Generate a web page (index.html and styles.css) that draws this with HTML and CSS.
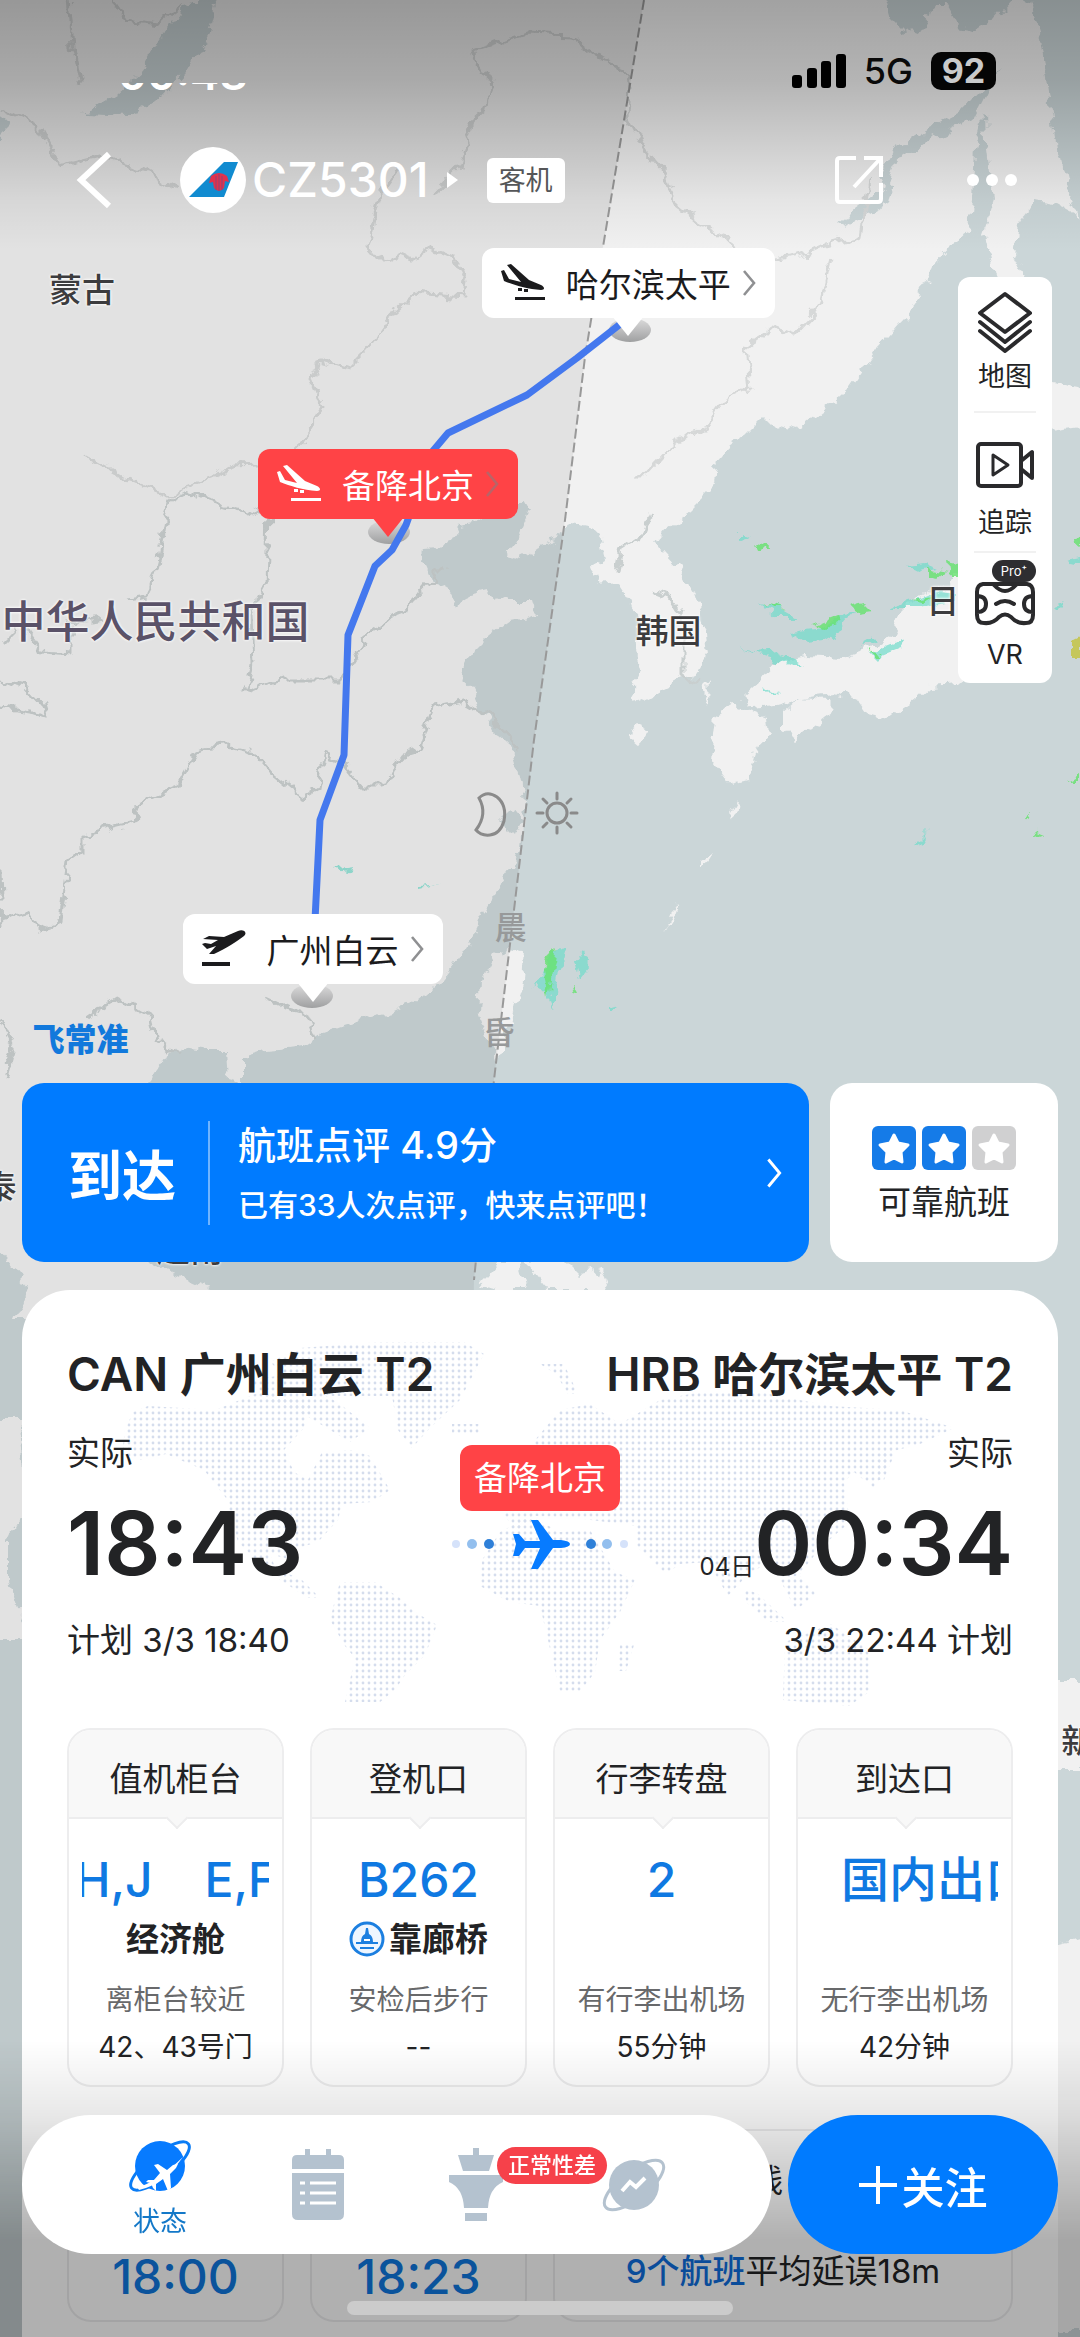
FILE: index.html
```html
<!DOCTYPE html>
<html lang="zh-CN">
<head>
<meta charset="utf-8">
<meta name="viewport" content="width=device-width, initial-scale=1">
<title>CZ5301 航班状态</title>
<link rel="stylesheet" href="styles.css">
</head>
<body>
<svg class="defs" width="0" height="0" aria-hidden="true">
  <defs>
    <symbol id="landing" viewBox="0 0 46 38">
      <path d="M1 7l3-1 5 9 12 3L7 1l4-1 18 16 12 5c4 2 4 5 0 5-14-1-27-5-37-9z"/>
      <path d="M18 24h4v3h-4zM24 25h4v3h-4zM15 33h30v3H15z"/>
    </symbol>
    <symbol id="takeoff" viewBox="0 0 46 38">
      <path d="M2 9l6-3 15 1 14-6c5-2 10 1 6 5-8 6-17 12-30 18h-5l7-8-9 3-5-5 3-1 6 1 7-4z"/>
      <path d="M1 32h28v4H1z"/>
    </symbol>
    <symbol id="chevron" viewBox="0 0 16 32"><path d="M3 4l10 12L3 28" fill="none" stroke="currentColor" stroke-width="2.6"/></symbol>
    <symbol id="star" viewBox="0 0 44 44"><rect width="44" height="44" rx="6"/><path d="M22 9l4 8 10 2-7 7 1 10-8-4-8 4 1-10-7-7 10-2z" fill="#fff" stroke="#fff" stroke-width="3" stroke-linejoin="round"/></symbol>
  </defs>
</svg>

<main class="app">
  <div class="map">
    <svg class="map-art" viewBox="0 0 1080 2337" preserveAspectRatio="none" aria-hidden="true">
      <defs>
        <filter id="rough" x="-5%" y="-5%" width="110%" height="110%">
          <feTurbulence type="fractalNoise" baseFrequency=".07" numOctaves="3" seed="4" result="n"/>
          <feDisplacementMap in="SourceGraphic" in2="n" scale="16" xChannelSelector="R" yChannelSelector="G"/>
        </filter>
        <linearGradient id="ball" x1="0" y1="0" x2="0" y2="1"><stop offset="0" stop-color="#dcdcdc"/><stop offset="1" stop-color="#9fa0a1"/></linearGradient>
      </defs>
      <rect width="1080" height="2337" fill="#cbd6d8"/>
      <g fill="#f1f1f1" filter="url(#rough)">
        <path d="M-20 -20H885V0L890 18 905 33 925 27 932 4H945L958 28 985 33 996 46 1000 60 1003 100 985 112 975 150 972 200 969 232 950 245 935 265 915 305 880 345 850 388 825 410 797 431 775 425 765 415 745 435 728 448 718 460 712 490 690 512 665 530 655 543 663 552 680 570 696 596 706 630 708 655 698 672 680 680 660 690 638 702 628 694 640 672 634 650 642 632 630 600 618 582 598 584 592 568 606 560 602 540 588 524 568 520 562 538 540 545 520 560 504 556 514 545 530 510 524 500 495 508 474 524 460 526 448 546 424 548 422 560 430 578 446 588 455 608 470 596 486 592 504 600 534 600 538 614 510 620 490 634 472 652 460 676 475 690 484 712 495 735 512 750 520 775 524 800 519 845 513 868 498 890 486 910 474 935 462 955 448 972 438 985 420 1000 402 1008 390 1014 370 1019 345 1026 320 1035 302 1047 280 1050 258 1052 245 1056 245 1085 228 1080 226 1052 210 1052 180 1048 165 1056 150 1082 120 1110 90 1200 150 1262 215 1290 200 1320 15 1320 28 1285 0 1250H-20z"/>
        <path d="M1025 0l10 6 5 32 10 60 8 50 12 50 10 18-22-12-22-4-18 24-4 32 14 26 6 30h-30l-12-50-8-30 10-30-8-60-2-50-10-60 20-12 18-20-4-10z"/>
        <path d="M1048 382l52 10v32l-56 8z"/>
        <path d="M742 698l20-18 15-18 30-6 35 2 30-10 20-14 8-20 18-18 30-12 20-20 70-20v110l-30 10-20 12-12-8-18 16-30 2-22 20-18 14-20-6-10-14-24-6-30 4-28 8-22 2z"/>
        <path d="M782 714l18-16 30 2 8 8-20 16-24 16-12-10z"/>
        <path d="M715 718l20-14 30 12 2 16-10 20-10 28-16 4-20-26 2-22z"/>
        <path d="M627 733l12-8 8 4-8 14zM508 948l14 4-2 30-14 60-10 20-18-50 2-30 14-26zM702 689l6-8-1 22zM700 860l12-8-12 18zM672 912l6-8-8 20-6 10zM728 812l8-14-2 20z"/>
        <path d="M500 1262h20l8 28h-30l-18-4zM525 1262l40-2 14 14 20-4 8 20h-60l-16-20z"/>
        <path d="M-20 1420h40l8 80-20 40v40l20 60H-20zM1050 1680h50v90h-50zM1050 1945l50-14v400h-50z"/>
      </g>
      <g fill="#cbd6d8" filter="url(#rough)">
        <path d="M190 0h28l-8 30-24 42-22 24-34 20-46-2 34-20 26-24 16-30z"/>
        <path d="M1000 68L960 112 925 130 892 150 880 178 886 186 852 210 842 226 870 214 886 204 896 160 930 138 975 118zM-10 110l16 12-8 24zM500 820l12-12 8 10-6 16z"/>
      </g>
      <g class="border-lines" filter="url(#rough)">
        <path d="M112 0l14 20 34 4 22-18M68 0l4 45 8 40M0 108l40 20 20 38 40-10 46 14 32 20M480 70l-8-18 24-8 30-10 46 2 24 18 24 14 10 18-2 30 18 35 18 20 10 30 24 20 32 20 8 28M480 72l14 6-6 30-16 14-14 45-22 26M398 170l-20 28-10 50 12 14 20-8 14 6 16-12 24 10 14 20-2 20-50-4-22 20-14 20-18 20-14 14-26-8-12 20 12 28-16 24-8 20-14 12-50 2-14 8-34 14-16 8-40-16-20-12-26-14M870 180l-8 56-40 10-18 8-30 5M830 260l-12 50-24 26-22-8-26 20 4 40-28 14-22 30-24 10-38 40"/>
      </g>
      <g class="coast-lines" filter="url(#rough)">
        <path d="M268 514l-2 71-16 30 2 48-8 30 0 0 38-14 60 0 30-48 35-24 26-30 10-10M262 514l-38-10-36-12-20 10-10 55-10 40-20 3M0 645l22-22 20 28 28 2 0-30 36-5M0 680l26 6 18 20 4 12-18-6-30-4M0 920l30-8 6 18 24-8 8-60 14-10v-18l48-12 18-24 30-12 20-36 30-6 24 6 20 24 30 24 16-10 6-34 16 6 22 26 20 0 24-34 14-4 14-42 30-6 24 14 32 40M265 998l22 10 16 4 12 28M88 1018l30-20 32 18 6 24 22 14M0 870l2 60M0 1020l14 30-8 30M650 516l-8 20-22 14-4 20M650 590l20 8 12 20M684 640v36l14 6"/>
      </g>
      <g fill="#6fdccb" opacity=".7" filter="url(#rough)">
        <path d="M740 532l10 4-10 3zM760 606l22 3 14 8-20 0zM790 632l34-4 20-14 12-2-14 16-20 12-16 2zM888 608l26-8 24-10 16 2v10l-36 6zM870 652l24-10 14-4-8 10-24 10zM740 648l16 4 20-2 28 14-12 0-34-10zM905 565l24-2 10 4-20 4zM540 980l12-26 14-8-6 22-6 40-6-16-14-4zM576 960l8-10 6 16-10 12zM610 1002l8 6-8 2zM338 868l14-2-8 6zM764 688l14 6-12-2zM870 634l-6 14 10-8zM1066 560l20-4v8zM1052 606l12-4-8 8zM912 848l4-6 14-14-8 14zM420 886l20-2-20 4z"/>
      </g>
      <g fill="#66e36e" opacity=".8" filter="url(#rough)">
        <path d="M755 545l14 3-8 5zM766 606l20 4-16 0zM815 626l20-8 6 4-16 8zM846 604l16-4 10 10-14 2zM928 568l20 4-8 6-12-2zM950 560l10 2v18h-8zM912 600l20-3-10 6zM872 649l10 6-8 0zM546 958l10-10-4 26-4 24-4-26zM570 992l6-8-2 10zM1034 830l10 4-8 3zM1074 540l8-4v10zM1026 820l4-8-1 10zM1070 782l12-6v6z"/>
      </g>
      <path d="M1072 640l12-6v26l-12 0z" fill="#c5c75c" filter="url(#rough)"/>
      <path d="M0 0H644L603 247 585 357 565 520 534 740 494 1080 474 1280 460 2337H0z" fill="#000" opacity=".06"/>
      <path d="M644 0L603 247 585 357 565 520 534 740 494 1080 474 1280" fill="none" stroke="#999" stroke-width="2" stroke-dasharray="10 4"/>
      <g fill="none" stroke="#8a8a8a" stroke-width="3" stroke-linecap="round">
        <path d="M479 798q8-8 18-1 10 8 7 24-4 13-14 14-9 1-14-5 12-16 3-32z"/>
        <circle cx="557" cy="813" r="10"/>
        <path d="M557 793v6M557 827v6M537 813h6M571 813h6M543 799l4 4M567 823l4 4M543 827l4-4M567 803l4-4"/>
      </g>
      <g fill="url(#ball)">
        <ellipse cx="630" cy="330" rx="21" ry="12"/><ellipse cx="389" cy="532" rx="21" ry="12"/><ellipse cx="312" cy="996" rx="21" ry="12"/>
      </g>
      <path d="M628 318L600 340 577 358 527 395 448 433 432 452 406 525 392 550 375 566 348 635 344 755 320 820 315 920" fill="none" stroke="#4478ee" stroke-width="7" stroke-linejoin="round"/>
    </svg>
    <span class="place p-mongolia">蒙古</span>
    <span class="place p-china">中华人民共和国</span>
    <span class="place p-korea">韩国</span>
    <span class="place p-japan">日</span>
    <span class="place p-dawn">晨</span>
    <span class="place p-dusk">昏</span>
    <span class="place p-thai">泰</span>
    <span class="place p-viet">越南</span>
    <span class="place p-guinea">新</span>
    <span class="brand">飞常准</span>
    <a class="callout c-hrb" href="#hrb"><svg class="c-icon"><use href="#landing"/></svg>哈尔滨太平<svg class="c-arrow"><use href="#chevron"/></svg></a>
    <a class="callout c-pek" href="#pek"><svg class="c-icon"><use href="#landing"/></svg>备降北京<svg class="c-arrow"><use href="#chevron"/></svg></a>
    <a class="callout c-can" href="#can"><svg class="c-icon"><use href="#takeoff"/></svg>广州白云<svg class="c-arrow"><use href="#chevron"/></svg></a>
  </div>

  <section class="hero">
    <div class="statusbar">
      <div class="clock"><span>00:48</span></div>
      <svg width="54" height="34" viewBox="0 0 54 34" aria-hidden="true"><rect y="21" width="10" height="13" rx="3"/><rect x="15" y="14" width="10" height="20" rx="3"/><rect x="29" y="7" width="10" height="27" rx="3"/><rect x="44" width="10" height="34" rx="3"/></svg>
      <span class="net">5G</span>
      <span class="battery">92</span>
    </div>
    <header class="topbar">
      <button class="icon-btn" aria-label="返回"><svg width="36" height="60" viewBox="0 0 36 60"><path d="M33 4L5 30l28 26" fill="none" stroke="#fff" stroke-width="6"/></svg></button>
      <svg class="logo" viewBox="0 0 66 66" aria-hidden="true"><circle cx="33" cy="33" r="33" fill="#fff"/><path d="M9 50L44 15H58L44 50z" fill="#118bd0"/><path d="M31 29q8-6 16 0l2 6-4-1-1 7q-5 6-10 0l-1-6-4 1z" fill="#e0324d"/><path d="M36 29v14M39 27v17M42 29v14" stroke="#8c4478" stroke-width="1"/></svg>
      <h1>CZ5301</h1>
      <svg class="tri" width="12" height="16" viewBox="0 0 12 16" aria-hidden="true"><path d="M0 0l11 8-11 8z" fill="#fff"/></svg>
      <span class="type">客机</span>
      <button class="icon-btn share" aria-label="分享"><svg width="50" height="50" viewBox="0 0 50 50"><path d="M22 3H6q-3 0-3 3v38q0 3 3 3h38q3 0 3-3V28M30 3H47V22M46 4L20 32" fill="none" stroke="#fff" stroke-width="4"/></svg></button>
      <button class="icon-btn" aria-label="更多"><svg width="52" height="14" viewBox="0 0 52 14" fill="#fff"><circle cx="7" cy="7" r="6"/><circle cx="26" cy="7" r="6"/><circle cx="45" cy="7" r="6"/></svg></button>
    </header>
    <nav class="tools" aria-label="地图工具">
      <button><svg width="58" height="62" viewBox="0 0 58 62" fill="none" stroke="#2a2a2c" stroke-width="4" stroke-linejoin="round" stroke-linecap="round"><path d="M29 3L54 22 29 41 4 22zM4 31l25 20 25-20M4 40l25 20 25-20"/></svg>地图</button>
      <button><svg width="60" height="48" viewBox="0 0 60 48" fill="none" stroke="#2a2a2c" stroke-width="4" stroke-linejoin="round"><rect x="3" y="3" width="43" height="42" rx="3"/><path d="M46 20l11-9v26l-11-9"/><path d="M18 14l15 10-15 10z" stroke-width="3"/></svg>追踪</button>
      <button><span class="pro">Pro⁺</span><svg width="62" height="46" viewBox="0 0 62 46" fill="none" stroke="#2a2a2c" stroke-width="4" stroke-linecap="round"><path d="M9 3H53q6 1 6 8V34q0 8-7 8-9 1-15-6-6-5-12 0-6 7-15 6-7 0-7-8V11q0-7 6-8zM20 4q11 12 22 0M3 15q9 0 9 8t-9 8M59 15q-9 0-9 8t9 8M22 23q9-6 18 0"/></svg>VR</button>
    </nav>
  </section>

  <section class="summary">
    <a class="review" href="#review">
      <strong>到达</strong>
      <span class="review-text"><b>航班点评 4.9分</b><span>已有33人次点评，快来点评吧！</span></span>
      <svg width="20" height="36" viewBox="0 0 16 32" aria-hidden="true"><use href="#chevron"/></svg>
    </a>
    <div class="reliable">
      <div class="stars"><svg class="on"><use href="#star"/></svg><svg class="on"><use href="#star"/></svg><svg class="off"><use href="#star"/></svg></div>
      <span>可靠航班</span>
    </div>
  </section>

  <section class="card">
    <svg class="world" viewBox="22 1290 1036 430" aria-hidden="true">
      <defs><pattern id="dots" width="6" height="6" patternUnits="userSpaceOnUse"><circle cx="3" cy="3" r="1.4" fill="#d5dded"/></pattern></defs>
      <g fill="url(#dots)">
        <path d="M125 1430l8-18 15-6 67 4 20-8 25-10 50 12-6 24-20 22 10 22 14 8 14-28 30-2 18 6 20 34-18 12-30 2-4 16-20 22-20 6-6 12-22-6 6 16 24 8 20 20-12 0-40-26-30-30-12-44-22-28-38-16-26 6-18-6z"/>
        <path d="M270 1362l30-14 80-6h84l20 12-24 46-30 28-18 20-14-18-6-34-60 0-36-10zM250 1380l40-6 50 30 30 24-20 14-50-30-30-10zM452 1424h28v10h-28z"/>
        <path d="M340 1582h35l25 16 15 14 22 13-12 30-20 20-10 15-15 12h-35l10-44-10-12-15-26 5-20z"/>
        <path d="M500 1532l30-16 30 16 30-2 25 42 20 8-15 32-20 28-5 32-15 20h-20l-12-52-8-34-30-4-30-16 2-26zM620 1645h14l-8 26h-8z"/>
        <path d="M500 1510l12-30 23-40 25-30 30-6 30 20 40-24 40-8h60l70 14 70 4 54 18-34 16-30 8-6 20-10 16-20-16-10 10 6 40-30 26-20 26-14 6-18-16-18 8-22 24-20-34-28 2-14 10-30-28 0-20-60-8-40-2-20 14z"/>
        <path d="M785 1642l46-18 38 26v42l-20 14-66-6zM744 1588l14 6 30 28-20 0-22-20zM780 1580l20-4 16 18-20 16zM540 1364h24l14 30h-10l-12-20zM880 1450l16 0-12 30h-6z"/>
      </g>
    </svg>
    <div class="titles"><h2>CAN 广州白云 T2</h2><h2>HRB 哈尔滨太平 T2</h2></div>
    <div class="route">
      <div class="end">
        <span class="line">实际</span>
        <span class="time">18:43</span>
        <span class="line">计划 3/3 18:40</span>
      </div>
      <div class="middle">
        <span class="divert">备降北京</span>
        <svg width="176" height="60" viewBox="0 0 176 60" aria-hidden="true">
          <g fill="#2f80d8"><circle cx="37" cy="30" r="5"/><circle cx="139" cy="30" r="5"/></g>
          <g fill="#93bfee"><circle cx="20" cy="30" r="5"/><circle cx="155" cy="30" r="5"/></g>
          <g fill="#d5e2fa"><circle cx="4" cy="30" r="4"/><circle cx="172" cy="30" r="4"/></g>
          <path d="M61 20h6l6 7h15L79 6h7l15 20h8q9 1 9 4t-9 4h-8L86 55h-7l9-21H73l-6 8h-6l3-12z" fill="#077bff"/>
        </svg>
      </div>
      <div class="end right">
        <span class="line">实际</span>
        <span class="time"><small>04日</small>00:34</span>
        <span class="line">3/3 22:44 计划</span>
      </div>
    </div>
    <div class="infos">
      <article class="info"><h3>值机柜台</h3><div class="big marquee"><span>H,J</span><span>E,F</span></div><div class="sub">经济舱</div><div class="hint">离柜台较近</div><div class="val">42、43号门</div></article>
      <article class="info"><h3>登机口</h3><div class="big">B262</div><div class="sub"><svg width="36" height="36" viewBox="0 0 36 36" aria-hidden="true"><circle cx="18" cy="18" r="16" fill="#eef6ff" stroke="#1c7fe0" stroke-width="3"/><path d="M17 7h2l1 6q4 2 4 8h5v2H7v-2h5q0-6 4-8zM11 26h14v2H11z" fill="#1c7fe0"/><path d="M15 19h6" stroke="#fff" stroke-width="2"/></svg>靠廊桥</div><div class="hint">安检后步行</div><div class="val">--</div></article>
      <article class="info"><h3>行李转盘</h3><div class="big">2</div><div class="sub"></div><div class="hint">有行李出机场</div><div class="val">55分钟</div></article>
      <article class="info"><h3>到达口</h3><div class="big exit">国内出口</div><div class="sub"></div><div class="hint">无行李出机场</div><div class="val">42分钟</div></article>
    </div>
    <div class="infos more">
      <article class="info"><div class="big">18:00</div></article>
      <article class="info"><div class="big">18:23</div></article>
      <article class="info wide"><div class="cap">线</div><div class="delay"><b>9个航班</b>平均延误18m</div></article>
    </div>
  </section>

  <div class="dock">
    <nav class="tabs">
      <a class="tab active" href="#status"><svg width="64" height="60" viewBox="0 0 64 60" aria-hidden="true"><ellipse cx="32" cy="30" rx="36" ry="12" transform="rotate(-38 32 30)" fill="none" stroke="#0a7cf5" stroke-width="3"/><circle cx="32" cy="30" r="25" fill="#077bff"/><path d="M9 51q18-3 46-30-20 28-44 33z" fill="#fff"/><path d="M26 29l4-1 9 6 6-5 5-1-2 4-6 6 1 14-3 3-5-12-7 5v7l-3-3-2-5-5-1 2-2 6 0 6-7z" fill="#fff"/></svg>状态</a>
      <a class="tab" href="#plan" aria-label="日程"><svg width="54" height="72" viewBox="0 0 54 72" aria-hidden="true"><path d="M1 20V11q0-5 5-5h8V0h5v6h16V0h5v6h8q5 0 5 5v9zM1 24h52v41q0 6-6 6H7q-6 0-6-6z" fill="#b4c2cf"/><path d="M9 34h5M9 44h5M9 54h5M19 34h26M19 44h26M19 54h26" stroke="#fff" stroke-width="3"/></svg></a>
      <a class="tab" href="#airport" aria-label="机场"><svg width="54" height="74" viewBox="0 0 54 74" aria-hidden="true"><path d="M9 7h15V0h6v7h15l-5 16H14zM0 27h54v7q-14 6-15 26H15Q14 40 0 34zM16 65h22v8H16z" fill="#b4c2cf"/></svg><span class="badge">正常性差</span></a>
      <a class="tab" href="#trend" aria-label="趋势"><svg width="64" height="60" viewBox="0 0 64 60" aria-hidden="true"><ellipse cx="32" cy="30" rx="36" ry="14" transform="rotate(-38 32 30)" fill="none" stroke="#b4c2cf" stroke-width="3"/><circle cx="32" cy="30" r="25" fill="#b4c2cf"/><path d="M20 36l8-9 6 5 9-9" fill="none" stroke="#fff" stroke-width="4"/></svg></a>
    </nav>
    <button class="follow"><svg width="38" height="38" viewBox="0 0 38 38" aria-hidden="true"><path d="M19 0v38M0 19h38" stroke="#fff" stroke-width="4"/></svg>关注</button>
    <span class="home"></span>
  </div>
</main>
</body>
</html>
```
FILE: styles.css
```css
* { box-sizing: border-box; }
body { margin: 0; font-family: Inter, "Noto Sans CJK SC", sans-serif; color: #222325; background: #cbd6d8; }
h1, h2, h3 { margin: 0; font-weight: 500; }
button { border: 0; background: none; padding: 0; font: inherit; color: inherit; }
a { color: inherit; text-decoration: none; }
svg { display: block; flex: none; }
.defs { position: absolute; }

.app { position: relative; min-height: 100vh; overflow: hidden; display: flex; flex-direction: column; }

/* map backdrop */
.map { position: absolute; inset: 0; }
.map-art { width: 100%; height: 100%; }
.border-lines, .coast-lines { fill: none; stroke: #d6d8d8; stroke-width: 3; stroke-linejoin: round; }
.coast-lines { stroke: #c9cfcf; }
.place { position: absolute; transform: translate(-50%, -50%); font-size: 33px; line-height: 40px; font-weight: 500; color: #3c3c3e; white-space: nowrap; text-shadow: 0 0 3px #fff, 0 0 3px #fff; }
.p-mongolia { left: 7.6%; top: 12.4%; }
.p-china { left: 14.4%; top: 26.6%; font-size: 44px; color: #5a5268; }
.p-korea { left: 61.9%; top: 27%; }
.p-japan { left: 87.3%; top: 25.7%; }
.p-dawn, .p-dusk { color: #97999a; font-size: 32px; text-shadow: none; }
.p-dawn { left: 47.3%; top: 39.7%; }
.p-dusk { left: 46.2%; top: 44.2%; }
.p-thai { left: 0; top: 50.8%; }
.p-viet { left: 17.6%; top: 53.5%; }
.p-guinea { left: 99.8%; top: 74.5%; }
.brand { position: absolute; left: 3%; top: 43.5%; font-size: 32px; line-height: 46px; font-weight: 900; color: #1279dc; }

.callout { position: absolute; height: 70px; padding: 0 18px; display: flex; align-items: center; font-size: 33px; color: #1b1b1d; background: #fff; border-radius: 12px; white-space: nowrap; }
.callout::after { content: ""; position: absolute; left: 50%; top: 68px; margin-left: -16px; border: 16px solid transparent; border-top: 20px solid #fff; border-bottom: 0; }
.c-icon { width: 46px; height: 38px; margin-right: 20px; fill: currentColor; }
.c-arrow { width: 16px; height: 32px; margin-left: 10px; color: #8f9092; }
.c-hrb { left: 44.6%; top: 10.6%; }
.c-pek { left: 23.9%; top: 19.2%; color: #fff; background: #ff4346; }
.c-pek::after { border-top-color: #ff4346; }
.c-pek .c-arrow { color: #b96468; }
.c-can { left: 16.9%; top: 39.1%; }

/* header over the map */
.hero { position: relative; min-height: 1083px; background: linear-gradient(rgba(0,0,0,.33), rgba(0,0,0,.25) 80px, rgba(0,0,0,.05) 200px, transparent 250px); }
.statusbar { display: flex; align-items: center; padding: 50px 84px 0 118px; height: 92px; }
.clock { position: relative; align-self: flex-end; flex: 1; height: 9px; overflow: hidden; color: #fff; font-size: 44px; font-weight: 600; }
.clock span { position: absolute; left: 0; bottom: 0; line-height: 36px; }
.net { margin-left: 18px; font-size: 36px; line-height: 40px; font-weight: 500; color: #0a0a0a; }
.battery { margin-left: 18px; width: 65px; height: 38px; border-radius: 10px; background: #050505; color: #c9cacb; font-size: 34px; font-weight: 700; line-height: 38px; text-align: center; }
.topbar { display: flex; align-items: center; height: 88px; margin-top: 44px; padding: 0 62px 0 76px; color: #fff; }
.icon-btn { display: flex; }
.logo { width: 66px; height: 66px; margin-left: 68px; }
.topbar h1 { margin-left: 6px; font-size: 48px; line-height: 60px; }
.tri { margin-left: 18px; }
.type { margin-left: 28px; padding: 0 12px; height: 45px; line-height: 45px; border-radius: 6px; font-size: 27px; background: #fff; color: #555658; }
.share { margin: 0 82px 0 auto; }

.tools { position: absolute; right: 28px; top: 277px; width: 94px; padding: 14px 16px 4px; background: #fff; border-radius: 12px; }
.tools button { position: relative; width: 100%; display: flex; flex-direction: column; align-items: center; font-size: 27px; line-height: 40px; }
.tools button + button { border-top: 2px solid #f1f1f1; }
.tools button:nth-child(1) { padding-bottom: 14px; gap: 4px; }
.tools button:nth-child(2) { padding: 28px 0 8px; gap: 14px; }
.tools button:nth-child(3) { padding: 28px 0 4px; gap: 8px; }
.pro { position: absolute; top: 7px; right: 0; width: 44px; height: 22px; border-radius: 11px; background: #2e2e31; color: #fff; font-size: 13px; line-height: 22px; text-align: center; }

.summary { position: relative; display: flex; gap: 21px; margin: 0 22px; }
.review { flex: 1; display: flex; align-items: center; min-height: 179px; padding: 0 25px 0 46px; border-radius: 22px; background: #007bff; color: #fff; }
.review strong { font-size: 54px; font-weight: 700; padding-right: 32px; }
.review-text { flex: 1; display: flex; flex-direction: column; gap: 16px; padding-left: 28px; border-left: 2px solid #6fb4ff; font-size: 30px; line-height: 40px; font-weight: 500; }
.review-text b { font-size: 38px; line-height: 48px; font-weight: 500; }
.reliable { width: 228px; display: flex; flex-direction: column; align-items: center; justify-content: center; gap: 10px; padding-top: 4px; border-radius: 22px; background: #fff; font-size: 33px; line-height: 44px; }
.stars { display: flex; gap: 6px; }
.stars svg { width: 44px; height: 44px; }
.on { fill: #157be8; }
.off { fill: #d0d0d1; }

/* flight card */
.card { position: relative; flex: 1; margin: 28px 22px 0; padding: 52px 45px 15px; border-radius: 48px 48px 0 0; background: #fff; }
.world { position: absolute; left: 0; top: 0; width: 100%; }
.titles { position: relative; display: flex; justify-content: space-between; }
.titles h2 { font-size: 46px; line-height: 64px; font-weight: 600; white-space: nowrap; }
.route { position: relative; display: grid; grid-template-columns: 1fr auto 1fr; margin-top: 27px; }
.end { display: flex; flex-direction: column; }
.right { align-items: flex-end; }
.line { font-size: 33px; line-height: 40px; }
.time { height: 90px; margin: 25px 0 32px; font-size: 88px; line-height: 90px; font-weight: 600; white-space: nowrap; }
.time small { font-size: 24px; line-height: 24px; font-weight: 400; }
.middle { display: flex; flex-direction: column; align-items: center; padding-top: 12px; gap: 3px; }
.divert { padding: 0 14px; border-radius: 12px; background: #ff4346; color: #fff; font-size: 33px; line-height: 66px; }

.infos { position: relative; display: grid; grid-template-columns: repeat(4, 1fr); gap: 26px; margin-top: 68px; }
.info { min-width: 0; border: 2px solid #ededee; border-radius: 24px; padding-bottom: 20px; text-align: center; overflow: hidden; font-size: 28px; line-height: 36px; }
.info h3 { position: relative; height: 89px; font-size: 33px; line-height: 98px; font-weight: 400; background: #f8f8f8; border-bottom: 2px solid #ededee; }
.info h3::after { content: ""; position: absolute; left: 50%; top: 80px; width: 14px; height: 14px; margin-left: -7px; transform: rotate(45deg); background: #f8f8f8; border: solid #ededee; border-width: 0 2px 2px 0; }
.big { margin: 33px 13px 0; font-size: 48px; line-height: 56px; font-weight: 500; color: #0f79e2; white-space: nowrap; overflow: hidden; }
.marquee { display: flex; justify-content: center; gap: 52px; }
.exit { padding-left: 30px; text-align: left; }
.sub { display: flex; justify-content: center; align-items: center; gap: 4px; height: 40px; margin-top: 11px; font-size: 33px; font-weight: 600; }
.hint { margin-top: 23px; color: #68696b; }
.val { margin-top: 11px; }
.more { margin-top: 42px; }
.more .info { height: 193px; padding: 0; }
.more .big { margin-top: 118px; }
.wide { grid-column: span 2; }
.cap { margin-top: 30px; padding-right: 32px; font-size: 32px; line-height: 40px; }
.delay { margin-top: 48px; font-size: 33px; line-height: 44px; }
.delay b { font-weight: 500; color: #0f6fdf; }

/* bottom dock */
.dock { position: fixed; left: 0; right: 0; bottom: 0; display: grid; grid-template-columns: 1fr 270px; gap: 47px 16px; padding: 75px 22px 22px; background: linear-gradient(rgba(0,0,0,0), rgba(0,0,0,.09) 75px, rgba(0,0,0,.31) 200px); }
.tabs { display: flex; justify-content: center; height: 139px; border-radius: 70px; background: #fff; }
.tab { position: relative; flex: 0 1 158px; display: flex; flex-direction: column; align-items: center; justify-content: center; font-size: 27px; line-height: 36px; color: #1378c8; }
.active { gap: 8px; padding-top: 6px; }
.badge { position: absolute; left: 100px; top: 32px; padding: 0 11px; border-radius: 19px; background: #f6414a; color: #fff; font-size: 22px; line-height: 37px; font-weight: 500; white-space: nowrap; z-index: 1; }
.follow { display: flex; align-items: center; justify-content: center; gap: 5px; border-radius: 70px; background: #007bff; color: #fff; font-size: 43px; font-weight: 500; }
.home { grid-column: 1 / -1; justify-self: center; width: 386px; height: 14px; border-radius: 7px; background: #cbcbcb; }
```
